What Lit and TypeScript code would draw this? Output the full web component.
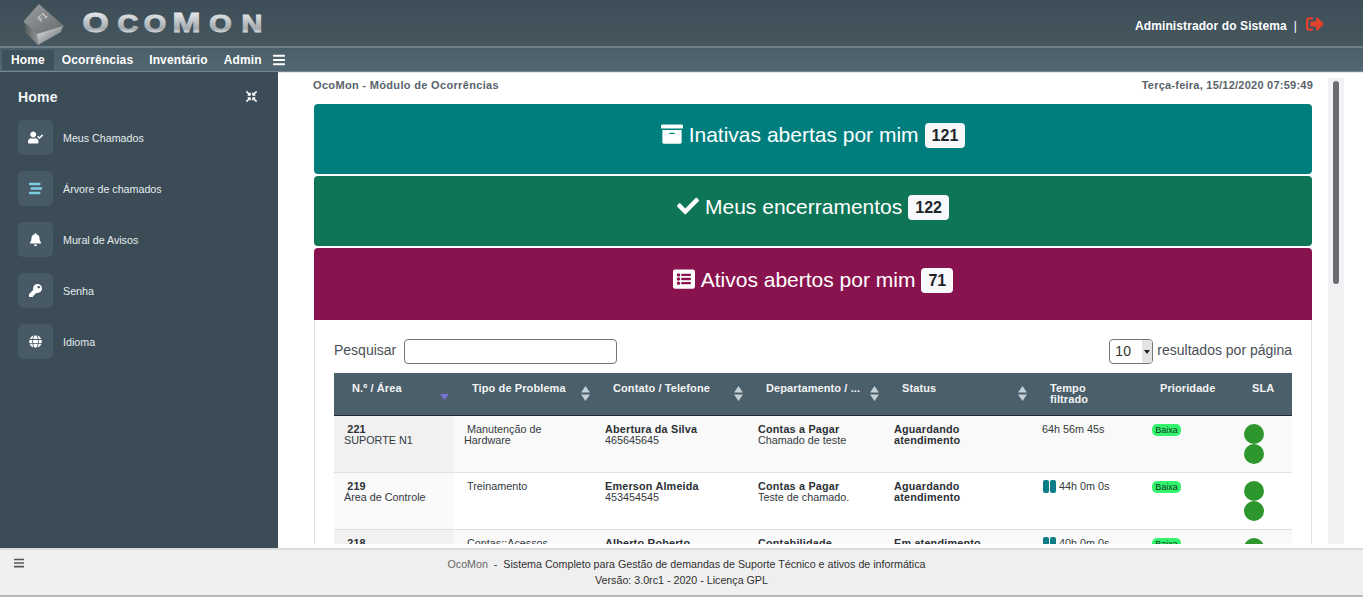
import { LitElement, html, css, svg } from "lit";
import { customElement } from "lit/decorators.js";

const P = {
  userCheck: ["0 0 640 512", "M224 256c70.7 0 128-57.3 128-128S294.7 0 224 0 96 57.3 96 128s57.3 128 128 128zm89.6 32h-16.7c-22.2 10.2-46.9 16-72.9 16s-50.6-5.8-72.9-16h-16.7C60.2 288 0 348.2 0 422.4V464c0 26.5 21.5 48 48 48h352c26.5 0 48-21.5 48-48v-41.6c0-74.2-60.2-134.4-134.4-134.4zm323-128.4l-27.8-28.1c-4.6-4.7-12.1-4.7-16.8-.1l-104.8 104-45.5-45.8c-4.6-4.7-12.1-4.7-16.8-.1l-28.1 27.9c-4.7 4.6-4.7 12.1-.1 16.8l81.7 82.3c4.6 4.7 12.1 4.7 16.8.1l141.3-140.2c4.6-4.7 4.7-12.2.1-16.8z"],
  stream: ["0 0 512 512", "M16 128h416c8.84 0 16-7.16 16-16V48c0-8.84-7.16-16-16-16H16C7.16 32 0 39.16 0 48v64c0 8.84 7.16 16 16 16zm480 80H80c-8.84 0-16 7.16-16 16v64c0 8.84 7.16 16 16 16h416c8.84 0 16-7.16 16-16v-64c0-8.84-7.16-16-16-16zm-64 176H16c-8.84 0-16 7.16-16 16v64c0 8.84 7.16 16 16 16h416c8.84 0 16-7.16 16-16v-64c0-8.84-7.16-16-16-16z"],
  bell: ["0 0 448 512", "M224 512c35.32 0 63.97-28.65 63.97-64H160.03c0 35.35 28.65 64 63.97 64zm215.39-149.71c-19.32-20.76-55.47-51.99-55.47-154.29 0-77.7-54.48-139.9-127.94-155.16V32c0-17.67-14.32-32-31.98-32s-31.98 14.33-31.98 32v20.84C118.56 68.1 64.08 130.3 64.08 208c0 102.3-36.15 133.53-55.47 154.29-6 6.45-8.66 14.16-8.61 21.71.11 16.4 12.98 32 32.1 32h383.8c19.12 0 32-15.6 32.1-32 .05-7.55-2.61-15.27-8.61-21.71z"],
  key: ["0 0 512 512", "M512 176.001C512 273.203 433.202 352 336 352c-11.22 0-22.19-1.062-32.827-3.069l-24.012 27.014A23.999 23.999 0 0 1 261.223 384H224v40c0 13.255-10.745 24-24 24h-40v40c0 13.255-10.745 24-24 24H24c-13.255 0-24-10.745-24-24v-78.059c0-6.365 2.529-12.47 7.029-16.971l161.802-161.802C163.108 213.814 160 195.271 160 176 160 78.798 238.797.001 335.999 0 433.488-.001 512 78.511 512 176.001zM336 128c0 26.51 21.49 48 48 48s48-21.49 48-48-21.49-48-48-48-48 21.49-48 48z"],
  globe: ["0 0 496 512", "M336.5 160C322 70.7 287.8 8 248 8s-74 62.7-88.5 152h177zM152 256c0 22.2 1.2 43.5 3.3 64h185.3c2.1-20.5 3.3-41.8 3.3-64s-1.2-43.5-3.3-64H155.3c-2.1 20.5-3.3 41.8-3.3 64zm324.7-96c-28.6-67.9-86.5-120.4-158-141.6 24.4 33.8 41.2 84.7 50 141.6h108zM177.2 18.4C105.8 39.6 47.8 92.1 19.3 160h108c8.7-56.9 25.5-107.8 49.9-141.6zM487.4 192H372.7c2.1 21 3.3 42.5 3.3 64s-1.2 43-3.3 64h114.6c5.5-20.5 8.6-41.8 8.6-64s-3.1-43.5-8.5-64zM120 256c0-21.5 1.2-43 3.3-64H8.6C3.2 212.5 0 233.8 0 256s3.2 43.5 8.6 64h114.6c-2-21-3.2-42.5-3.2-64zm39.5 96c14.5 89.3 48.7 152 88.5 152s74-62.7 88.5-152h-177zm159.3 141.6c71.4-21.2 129.4-73.7 158-141.6h-108c-8.8 56.9-25.6 107.8-50 141.6zM19.3 352c28.6 67.9 86.5 120.4 158 141.6-24.4-33.8-41.2-84.7-50-141.6h-108z"],
  archive: ["0 0 512 512", "M32 448c0 17.7 14.3 32 32 32h384c17.7 0 32-14.3 32-32V160H32v288zm160-212c0-6.6 5.4-12 12-12h104c6.6 0 12 5.4 12 12v8c0 6.6-5.4 12-12 12H204c-6.6 0-12-5.4-12-12v-8zM480 32H32C14.3 32 0 46.3 0 64v48c0 8.8 7.2 16 16 16h480c8.8 0 16-7.2 16-16V64c0-17.7-14.3-32-32-32z"],
  check: ["0 0 512 512", "M173.898 439.404l-166.4-166.4c-9.997-9.997-9.997-26.206 0-36.204l36.203-36.204c9.997-9.998 26.207-9.998 36.204 0L192 312.69 432.095 72.596c9.997-9.997 26.207-9.997 36.204 0l36.203 36.204c9.997 9.997 9.997 26.206 0 36.204l-294.4 294.401c-9.998 9.997-26.207 9.997-36.204-.001z"],
  listAlt: ["0 0 512 512", "M464 480H48c-26.51 0-48-21.49-48-48V80c0-26.51 21.49-48 48-48h416c26.51 0 48 21.49 48 48v352c0 26.51-21.49 48-48 48zM128 120c-22.091 0-40 17.909-40 40s17.909 40 40 40 40-17.909 40-40-17.909-40-40-40zm0 96c-22.091 0-40 17.909-40 40s17.909 40 40 40 40-17.909 40-40-17.909-40-40-40zm0 96c-22.091 0-40 17.909-40 40s17.909 40 40 40 40-17.909 40-40-17.909-40-40-40zm288-136v-32c0-6.627-5.373-12-12-12H204c-6.627 0-12 5.373-12 12v32c0 6.627 5.373 12 12 12h200c6.627 0 12-5.373 12-12zm0 96v-32c0-6.627-5.373-12-12-12H204c-6.627 0-12 5.373-12 12v32c0 6.627 5.373 12 12 12h200c6.627 0 12-5.373 12-12zm0 96v-32c0-6.627-5.373-12-12-12H204c-6.627 0-12 5.373-12 12v32c0 6.627 5.373 12 12 12h200c6.627 0 12-5.373 12-12z"],
  signOut: ["0 0 512 512", "M497 273L329 441c-15 15-41 4.5-41-17v-96H152c-13.3 0-24-10.7-24-24v-96c0-13.3 10.7-24 24-24h136V88c0-21.4 25.9-32 41-17l168 168c9.3 9.4 9.3 24.6 0 34zM192 436v-40c0-6.6-5.4-12-12-12H96c-17.7 0-32-14.3-32-32V160c0-17.7 14.3-32 32-32h84c6.6 0 12-5.4 12-12V76c0-6.6-5.4-12-12-12H96c-53 0-96 43-96 96v192c0 53 43 96 96 96h84c6.6 0 12-5.4 12-12z"],
  compress: ["0 0 512 512", "M200 288H88c-21.4 0-32.1 25.8-17 41l32.9 31-99.2 99.3c-6.2 6.2-6.2 16.4 0 22.6l25.4 25.4c6.2 6.2 16.4 6.2 22.6 0L152 408l31.1 33c15.1 15.1 40.9 4.4 40.9-17V312c0-13.3-10.7-24-24-24zm112-64h112c21.4 0 32.1-25.9 17-41l-33-31 99.3-99.3c6.2-6.2 6.2-16.4 0-22.6L481.9 4.7c-6.2-6.2-16.4-6.2-22.6 0L360 104l-31.1-33C313.8 55.9 288 66.6 288 88v112c0 13.3 10.7 24 24 24zm96 136l33-31.1c15.1-15.1 4.4-40.9-17-40.9H312c-13.3 0-24 10.7-24 24v112c0 21.4 25.9 32.1 41 17l31-32.9 99.3 99.3c6.2 6.2 16.4 6.2 22.6 0l25.4-25.4c6.2-6.2 6.2-16.4 0-22.6L408 360zM183 71.1L152 104 52.7 4.7c-6.2-6.2-16.4-6.2-22.6 0L4.7 30.1c-6.2 6.2-6.2 16.4 0 22.6L104 152l-33 31.1C55.9 198.2 66.6 224 88 224h112c13.3 0 24-10.7 24-24V88c0-21.3-25.9-32-41-16.9z"],
  bars: ["0 0 448 512", "M16 132h416c8.837 0 16-7.163 16-16V76c0-8.837-7.163-16-16-16H16C7.163 60 0 67.163 0 76v40c0 8.837 7.163 16 16 16zm0 160h416c8.837 0 16-7.163 16-16v-40c0-8.837-7.163-16-16-16H16c-8.837 0-16 7.163-16 16v40c0 8.837 7.163 16 16 16zm0 160h416c8.837 0 16-7.163 16-16v-40c0-8.837-7.163-16-16-16H16c-8.837 0-16 7.163-16 16v40c0 8.837 7.163 16 16 16z"],
};

const icon = (k: keyof typeof P, cls = "") =>
  html`<svg class="ic ${cls}" viewBox=${P[k][0]} fill="currentColor"><path d=${P[k][1]}></path></svg>`;

const keycap = svg`
  <defs>
    <linearGradient id="kt" x1="0" y1="0" x2="1" y2="1"><stop offset="0" stop-color="#9a9ea0"/><stop offset="1" stop-color="#666b6d"/></linearGradient>
    <linearGradient id="kr" x1="0" y1="0" x2="1" y2="1"><stop offset="0" stop-color="#e6e7e8"/><stop offset="1" stop-color="#5a5e60"/></linearGradient>
    <linearGradient id="kl" x1="0" y1="0" x2="1" y2="0"><stop offset="0" stop-color="#54595b"/><stop offset="1" stop-color="#8f9395"/></linearGradient>
  </defs>
  <polygon points="0,18 15,1 39,22 13,30" fill="url(#kt)" stroke="url(#kt)" stroke-width="1.5" stroke-linejoin="round"/>
  <polygon points="0,18 13,30 14,41 2,29" fill="url(#kl)"/>
  <polygon points="13,30 39,22 37,28 14,41" fill="url(#kr)"/>
  <text x="14" y="17" font-size="8" fill="#e4e6e7" font-family="Liberation Sans, sans-serif" transform="rotate(-42 17 14)">F1</text>
`;

const brand = svg`
  <defs>
    <linearGradient id="bg" gradientUnits="userSpaceOnUse" x1="0" y1="12" x2="0" y2="33">
      <stop offset="0" stop-color="#e9ebec"/><stop offset=".5" stop-color="#bcc1c4"/><stop offset=".8" stop-color="#a3a9ad"/><stop offset="1" stop-color="#e2e5e6"/>
    </linearGradient>
  </defs>
  <g transform="scale(1.2 1)" class="logo">
    <text y="32.5" x=".5" font-size="28">O<tspan x="29.5" font-size="24">c</tspan><tspan x="51.5" font-size="24">o</tspan><tspan x="75.5" font-size="28">M</tspan><tspan x="106" font-size="24">o</tspan><tspan x="133" font-size="24">n</tspan></text>
  </g>
`;

const NAV = ["Ocorrências", "Inventário", "Admin"];
const SIDE: [keyof typeof P, string, string][] = [
  ["userCheck", "Meus Chamados", ""],
  ["stream", "Árvore de chamados", "blue"],
  ["bell", "Mural de Avisos", ""],
  ["key", "Senha", ""],
  ["globe", "Idioma", ""],
];
const HEAD = [
  { t: "N.º / Área", s: "desc" },
  { t: "Tipo de Problema", s: "both" },
  { t: "Contato / Telefone", s: "both" },
  { t: "Departamento / ...", s: "both" },
  { t: "Status", s: "both" },
  { t: "Tempo filtrado", s: "" },
  { t: "Prioridade", s: "" },
  { t: "SLA", s: "" },
];
const ROWS = [
  { n: "221", a: "SUPORTE N1", p: ["Manutenção de", "Hardware"], c: "Abertura da Silva", f: "465645645", d: "Contas a Pagar", o: "Chamado de teste", s: "Aguardando atendimento", t: "64h 56m 45s", pause: false },
  { n: "219", a: "Área de Controle", p: ["Treinamento"], c: "Emerson Almeida", f: "453454545", d: "Contas a Pagar", o: "Teste de chamado.", s: "Aguardando atendimento", t: "44h 0m 0s", pause: true },
  { n: "218", a: "Contabilidade", p: ["Contas::Acessos"], c: "Alberto Roberto", f: "453454545", d: "Contabilidade", o: "Teste", s: "Em atendimento", t: "40h 0m 0s", pause: true },
];

@customElement("app-root")
export class AppRoot extends LitElement {
  static styles = css`
    :host { display: block; height: 597px; overflow: hidden; font-family: "Liberation Sans", Arial, sans-serif; }
    * { box-sizing: border-box; }
    .ic { display: block; }
    .page { display: flex; flex-direction: column; height: 597px; }

    .top { height: 46px; flex: none; display: flex; align-items: center; background: linear-gradient(#3d4e58, #45565f); color: #fff; }
    .key { width: 40px; height: 41px; margin: 3px 0 0 24px; flex: none; }
    .brand { margin-left: 18px; width: 190px; height: 46px; flex: none; }
    .logo text { font-family: "Liberation Sans", sans-serif; font-weight: bold; text-transform: uppercase; fill: url(#bg); stroke: url(#bg); stroke-width: 1.1px; }
    .user { margin-left: auto; display: flex; align-items: center; font-size: 12px; font-weight: bold; letter-spacing: .1px; margin-right: 39px; margin-top: 6px; }
    .sep { font-weight: normal; margin: 0 9px 0 7px; }
    .out { width: 18px; height: 18px; color: #e5412f; margin-top: -5px; }

    .nav { height: 26px; flex: none; display: flex; align-items: stretch; padding: 2px 0 1px 2px; background: linear-gradient(#4b5f69, #526771); border-top: 2px solid #6a7e88; border-bottom: 1px solid #75858e; color: #fff; font-size: 12px; font-weight: bold; letter-spacing: .12px; }
    .nav a { display: flex; align-items: center; padding: 0 8px; }
    .nav a.on { background: #3e505a; padding: 0 9px; }
    .nav .b { width: 12px; height: 14px; margin: 3px 0 0 3px; }

    .mid { flex: 1; min-height: 0; display: flex; }
    .side { width: 278px; flex: none; background: #3b4c57; color: #fff; padding: 16px 0 0 18px; position: relative; }
    .side h2 { margin: 0 0 14px; font-size: 14px; line-height: 18px; font-weight: bold; letter-spacing: .2px; color: #f2f5f6; }
    .shrink { position: absolute; left: 246px; top: 19px; width: 11px; height: 11px; }
    .item { display: flex; align-items: center; height: 35px; margin-bottom: 16px; font-size: 10.7px; color: #e6ebed; }
    .box { width: 35px; height: 35px; background: #465964; border-radius: 5px; display: flex; align-items: center; justify-content: center; margin-right: 10px; color: #fff; }
    .box .ic { width: 15px; height: 13px; }
    .box .blue { color: #7fcbe4; }

    .main { flex: 1; min-width: 0; display: flex; background: #fff; overflow: hidden; border-top: 1px solid #e8e8e8; padding-bottom: 4px; }
    .col { width: 1015px; margin-left: 35px; flex: none; overflow: hidden; }
    .title { display: flex; justify-content: space-between; height: 31px; padding: 6px 0 0; width: 1000px; font-size: 11px; line-height: 12px; font-weight: bold; color: #59636b; letter-spacing: .33px; }
    .title span + span { letter-spacing: .24px; }
    .panel { width: 998px; margin-left: 1px; height: 70px; margin-bottom: 2px; border-radius: 4px; color: #fff; display: flex; justify-content: center; padding-top: 19px; font-size: 21px; line-height: 24px; gap: 6px; }
    .panel .ic { width: 22px; height: 22px; margin-top: 0; }
    .teal { background: #007e7e; } .green { background: #0e7556; } .wine { background: #89134e; border-radius: 4px 4px 0 0; height: 72px; margin-bottom: 0; padding-top: 20px; }
    .count { background: #f8f9fa; color: #212529; border-radius: 4px; font-size: 16px; font-weight: bold; height: 25px; line-height: 25px; padding: 0 7px; margin-top: 0; }
    .card { width: 998px; margin-left: 1px; border: 1px solid #dfe3e5; border-top: 0; padding: 19px 19px 0; height: 300px; }
    .tools { display: flex; justify-content: space-between; height: 25px; font-size: 14px; line-height: 23px; color: #495057; margin-bottom: 9px; }
    .tools > div { display: flex; align-items: flex-start; }
    .search { width: 213px; height: 25px; border: 1px solid #767676; border-radius: 4px; margin-left: 7.5px; }
    .sel { width: 44px; height: 25px; border: 1px solid #767676; border-radius: 4px; margin-right: 4px; display: flex; justify-content: space-between; align-items: center; padding-left: 5px; font-size: 14px; overflow: hidden; background: #fff; color: #333; }
    .arrow { width: 10px; height: 23px; background: #e4e4e4; display: flex; align-items: center; justify-content: center; }
    .arrow::after { content: ""; border: 3px solid transparent; border-top: 4px solid #222; border-bottom: 0; }

    table { border-collapse: collapse; table-layout: fixed; width: 958px; font-size: 10.8px; line-height: 11px; color: #33393e; }
    .c0 { width: 120px; } .c1 { width: 141px; } .c2 { width: 153px; } .c3 { width: 136px; }
    .c4 { width: 148px; } .c5 { width: 110px; } .c6 { width: 92px; } .c7 { width: 58px; }
    th { background: #4a5f6a; color: #f2f4f5; height: 42px; padding: 10px 18px 0; font-size: 11px; text-align: left; vertical-align: top; font-weight: bold; letter-spacing: .1px; border-bottom: 1px solid #22292e; position: relative; overflow: hidden; white-space: nowrap; }
    th.wrap { white-space: normal; }
    th.c7 { padding-right: 0; }
    .sort { position: absolute; right: 5px; top: 13px; width: 9px; height: 15px; color: #c3d0d6; }
    .sort.desc { color: #7673d8; top: 19px; right: 5px; height: 9px; }
    td { height: 57px; padding: 8px 10px; vertical-align: top; border-bottom: 1px solid #dee2e6; }
    tr:nth-child(odd) td { background: #f9f9f9; }
    tr:nth-child(odd) td:first-child { background: #f1f1f1; }
    tr:nth-child(even) td:first-child { background: #fafafa; }
    b { color: #2b3035; letter-spacing: .2px; }
    .time { display: flex; align-items: flex-start; gap: 3px; }
    .pause { width: 13px; height: 13px; display: flex; gap: 1px; margin: -1px 0 0 1px; }
    .pause i { flex: 1; background: #0d7d88; border-radius: 2px; }
    .badge { display: inline-block; background: #33f36d; color: #0f3a1f; border-radius: 5px; font-size: 9px; line-height: 12px; height: 12px; padding: 0 3.2px; vertical-align: top; }
    .dot { width: 20px; height: 20px; border-radius: 50%; background: #2d962d; }

    .rail { width: 16px; margin: 5px 0 0; flex: none; background: #f1f2f4; padding: 3px 5px; }
    .thumb { height: 203px; background: #6c6c70; border-radius: 3px; }

    .foot { height: 49px; flex: none; background: #efefef; border-top: 2px solid #dcdcdc; border-bottom: 2px solid #b9b9b9; position: relative; font-size: 10.7px; text-align: center; color: #2f2f2f; padding-top: 6px; line-height: 16px; }
    .foot .l { position: absolute; left: 14px; top: 7px; width: 10px; height: 12px; color: #555; }
    .foot p { margin: 0; }
    .foot .one { padding-left: 10px; white-space: pre; }
    .foot span { color: #666; }
  `;

  render() {
    return html`<div class="page">
      <header class="top">
        <svg class="key" viewBox="0 0 40 41">${keycap}</svg>
        <svg class="brand" viewBox="0 0 190 46">${brand}</svg>
        <div class="user">Administrador do Sistema<span class="sep">|</span>${icon("signOut", "out")}</div>
      </header>
      <nav class="nav">
        <a class="on">Home</a>
        ${NAV.map((n) => html`<a>${n}</a>`)}
        ${icon("bars", "b")}
      </nav>
      <div class="mid">
        <aside class="side">
          <h2>Home</h2>
          ${icon("compress", "shrink")}
          ${SIDE.map(([k, t, c]) => html`<div class="item"><div class="box">${icon(k, c)}</div>${t}</div>`)}
        </aside>
        <main class="main">
          <div class="col">
            <div class="title"><span>OcoMon - Módulo de Ocorrências</span><span>Terça-feira, 15/12/2020 07:59:49</span></div>
            <div class="panel teal">${icon("archive")}<span>Inativas abertas por mim</span><span class="count">121</span></div>
            <div class="panel green">${icon("check")}<span>Meus encerramentos</span><span class="count">122</span></div>
            <div class="panel wine">${icon("listAlt")}<span>Ativos abertos por mim</span><span class="count">71</span></div>
            <div class="card">
              <div class="tools">
                <div>Pesquisar<div class="search"></div></div>
                <div><div class="sel">10<span class="arrow"></span></div>resultados por página</div>
              </div>
              <table>
                <thead><tr>
                  ${HEAD.map((h, i) => html`<th class="c${i} ${i === 5 ? "wrap" : ""}">${h.t}${
                    h.s === "desc"
                      ? html`<svg class="sort desc" viewBox="0 0 9 9" fill="currentColor"><polygon points="0,2 9,2 4.5,8"></polygon></svg>`
                      : h.s
                      ? html`<svg class="sort" viewBox="0 0 9 15" fill="currentColor"><polygon points="4.5,0 9,6.5 0,6.5"></polygon><polygon points="0,8.5 9,8.5 4.5,15"></polygon></svg>`
                      : ""
                  }</th>`)}
                </tr></thead>
                <tbody>
                  ${ROWS.map((r) => html`<tr>
                    <td><b>&nbsp;${r.n}</b><br />${r.a}</td>
                    <td>&nbsp;${r.p[0]}${r.p[1] ? html`<br />${r.p[1]}` : ""}</td>
                    <td><b>${r.c}</b><br />${r.f}</td>
                    <td><b>${r.d}</b><br />${r.o}</td>
                    <td><b>${r.s}</b></td>
                    <td><div class="time">${r.pause ? html`<span class="pause"><i></i><i></i></span>` : ""}<span>${r.t}</span></div></td>
                    <td><span class="badge">Baixa</span></td>
                    <td><div class="dot"></div><div class="dot"></div></td>
                  </tr>`)}
                </tbody>
              </table>
            </div>
          </div>
          <div class="rail"><div class="thumb"></div></div>
        </main>
      </div>
      <footer class="foot">
        ${icon("bars", "l")}
        <p class="one"><span>OcoMon</span>  -  Sistema Completo para Gestão de demandas de Suporte Técnico e ativos de informática</p>
        <p>Versão: 3.0rc1 - 2020 - Licença GPL</p>
      </footer>
    </div>`;
  }
}
